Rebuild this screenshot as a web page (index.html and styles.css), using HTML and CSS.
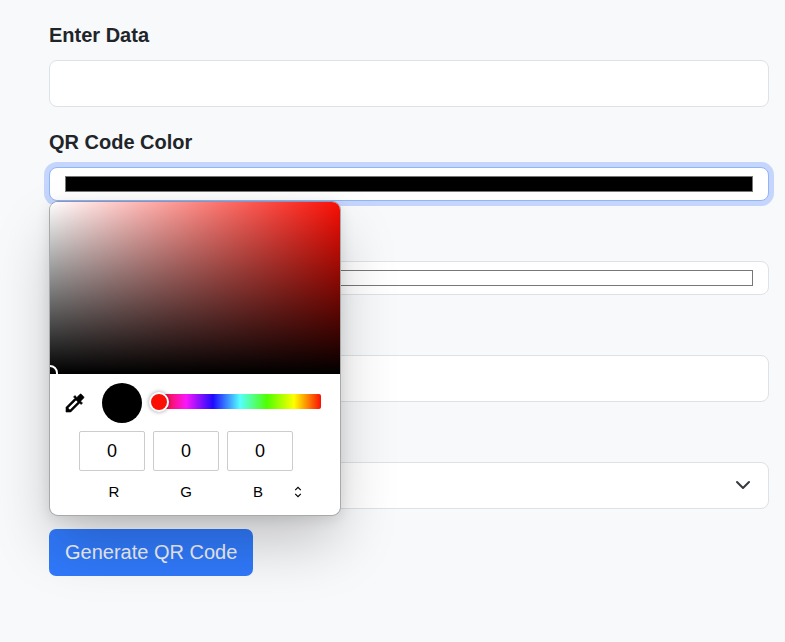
FILE: index.html
```html
<!DOCTYPE html>
<html lang="en">
<head>
  <meta charset="utf-8">
  <meta name="viewport" content="width=device-width, initial-scale=1">
  <title>QR Code</title>
  <link rel="stylesheet" href="styles.css">
</head>
<body>
  <form class="qr-form">
    <div class="group">
      <label for="data">Enter Data</label>
      <input class="control" type="text" id="data">
    </div>

    <div class="group">
      <label for="color">QR Code Color</label>
      <div class="anchor">
        <input class="control control-color is-open" type="color" id="color" value="#000000">
        <div class="picker" role="dialog" aria-label="Color picker">
          <div class="field"><span class="cursor"></span></div>
          <div class="tools">
            <button class="dropper" type="button" aria-label="Pick from screen">
              <svg viewBox="0 0 24 24" width="24" height="24" aria-hidden="true"><path d="M20.71 5.63l-2.34-2.34c-.39-.39-1.02-.39-1.41 0l-3.12 3.12-1.93-1.91-1.41 1.41 1.42 1.42L3 16.25V21h4.75l8.92-8.92 1.42 1.42 1.41-1.41-1.92-1.92 3.12-3.12c.4-.4.4-1.03.01-1.42zM6.92 19L5 17.08l8.06-8.06 1.92 1.92L6.92 19z"/></svg>
            </button>
            <span class="preview"></span>
            <input class="hue" type="range" min="0" max="360" value="0" aria-label="Hue">
          </div>
          <div class="channels">
            <input type="text" id="red" value="0">
            <input type="text" id="green" value="0">
            <input type="text" id="blue" value="0">
          </div>
          <div class="names">
            <label for="red">R</label>
            <label for="green">G</label>
            <label for="blue">B</label>
            <button class="format" type="button" aria-label="Change format">
              <svg viewBox="0 0 8 12" width="8" height="12" aria-hidden="true"><path d="M1.2 4.2 4 1.4 6.8 4.2M1.2 7.8 4 10.6 6.8 7.8"/></svg>
            </button>
          </div>
        </div>
      </div>
    </div>

    <div class="group">
      <label for="background">Background Color</label>
      <input class="control control-color" type="color" id="background" value="#ffffff">
    </div>

    <div class="group">
      <label for="size">Size</label>
      <input class="control" type="text" id="size">
    </div>

    <div class="group">
      <label for="format">Format</label>
      <div class="anchor">
        <select class="control" id="format">
          <option>PNG</option>
          <option>SVG</option>
        </select>
        <svg class="chevron" viewBox="0 0 16 16" width="16" height="16" aria-hidden="true"><path d="m2 5 6 6 6-6"/></svg>
      </div>
    </div>

    <button class="submit" type="submit">Generate QR Code</button>
  </form>
</body>
</html>
```

FILE: styles.css
```css
* {
  box-sizing: border-box;
}

body {
  margin: 0;
  min-height: 100vh;
  background: #f8f9fb;
  color: #212529;
  font: 20px/30px "Liberation Sans", Arial, sans-serif;
}

button,
input,
select {
  margin: 0;
  font: inherit;
  color: inherit;
}

.qr-form {
  padding: 20px 16px 20px 49px;
}

.group {
  display: flex;
  flex-direction: column;
  gap: 10px;
  margin-bottom: 20px;
}

.group > label {
  font-weight: bold;
}

.anchor {
  position: relative;
}

.control {
  display: block;
  width: 100%;
  height: 47px;
  padding: 8px 15px;
  border: 1px solid #dee2e6;
  border-radius: 8px;
  background: #fff;
  appearance: none;
  outline: none;
}

.control-color {
  height: 34px;
}

.control-color::-webkit-color-swatch-wrapper {
  padding: 0;
}

.control-color::-webkit-color-swatch {
  border: 1px solid #777;
  border-radius: 0;
}

.is-open {
  border-color: #8fb5fb;
  box-shadow: 0 0 0 5px #c5d5fb;
}

.chevron {
  position: absolute;
  top: 15px;
  right: 18px;
  fill: none;
  stroke: #343a40;
  stroke-width: 2;
  stroke-linecap: round;
  stroke-linejoin: round;
  pointer-events: none;
}

.submit {
  display: block;
  height: 47px;
  padding: 0 16px 2px;
  border: 0;
  border-radius: 7px;
  background: #3079fb;
  color: #f0f1f3;
}

/* Color picker popup */
.picker {
  position: absolute;
  z-index: 1;
  top: 100%;
  left: 0;
  width: 292px;
  border: 1px solid #a8a9aa;
  border-top-color: #00000040;
  border-radius: 9px;
  background: #fff;
  background-clip: padding-box;
  box-shadow: 0 3px 14px #0000001a, 0 30px 60px -4px #00000038;
  color: #000;
}

.field {
  position: relative;
  height: 172px;
  overflow: hidden;
  border-radius: 8px 8px 0 0;
  background:
    linear-gradient(to bottom, transparent, #000),
    linear-gradient(to right, #fff, #fa0f05);
}

.cursor {
  position: absolute;
  bottom: -7px;
  left: -8px;
  width: 16px;
  height: 16px;
  border: 2px solid #fff;
  border-radius: 50%;
}

.tools {
  display: flex;
  align-items: center;
  padding: 9px 19px 8px 13px;
}

.dropper,
.format {
  display: flex;
  padding: 0;
  border: 0;
  background: none;
}

.dropper svg {
  stroke: #000;
  stroke-width: 0.6;
}

.preview {
  width: 40px;
  height: 40px;
  margin: 0 7px 0 15px;
  border-radius: 50%;
  background: #000;
}

.hue {
  flex: 1;
  min-width: 0;
  height: 20px;
  margin-bottom: 4px;
  appearance: none;
  background: none;
}

.hue::-webkit-slider-runnable-track {
  height: 15px;
  border-radius: 2px;
  background: linear-gradient(to right, #fa0f05, #fa17fa, #1e0aff, #55ffff, #50ff00, #ffff00, #fa0f05) right / calc(100% - 10px) 100% no-repeat;
}

.hue::-webkit-slider-thumb {
  width: 20px;
  height: 20px;
  margin-top: -2px;
  border: 2px solid #fff;
  border-radius: 50%;
  background: #fa0f05;
  box-shadow: 0 0 4px #00000066;
  appearance: none;
}

.channels {
  display: flex;
  gap: 8px;
  padding-left: 29px;
}

.channels input {
  width: 66px;
  height: 40px;
  padding: 0;
  border: 1px solid #ccc;
  border-radius: 2px;
  background: #fff;
  font-size: 18px;
  text-align: center;
}

.names {
  display: grid;
  grid-template-columns: repeat(3, 72px) auto;
  align-items: center;
  justify-content: start;
  padding: 11px 0 14px 28px;
  font-size: 15px;
  line-height: 19px;
  text-align: center;
}

.format svg {
  fill: none;
  stroke: #000;
  stroke-width: 1.2;
}

@media (max-width: 400px) {
  .qr-form {
    padding-left: 16px;
  }
}
```
